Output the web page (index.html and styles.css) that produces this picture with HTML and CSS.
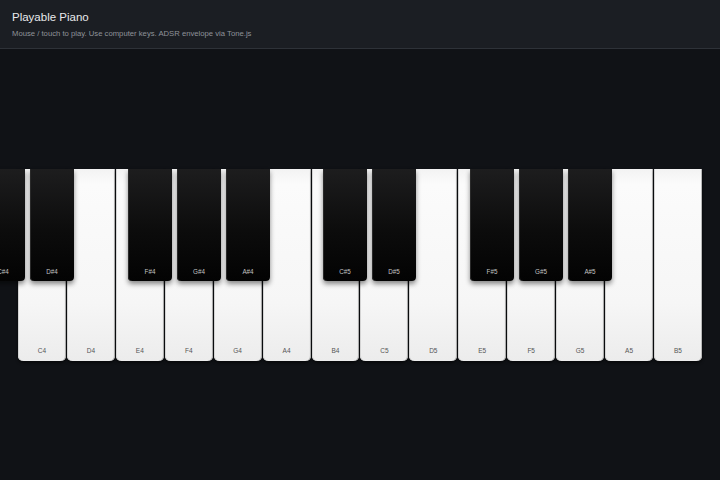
FILE: index.html
```html
<!DOCTYPE html>
<html lang="en">
<head>
<meta charset="utf-8">
<title>Playable Piano</title>
<meta name="viewport" content="width=device-width, initial-scale=1">
<link rel="stylesheet" href="styles.css">
</head>
<body>
<header class="top">
	<h1>Playable Piano</h1>
	<p>Mouse / touch to play. Use computer keys. ADSR envelope via Tone.js</p>
</header>
<main class="stage">
	<div class="piano">
		<div class="whites">
			<div class="wk"><span>C4</span></div>
			<div class="wk"><span>D4</span></div>
			<div class="wk"><span>E4</span></div>
			<div class="wk"><span>F4</span></div>
			<div class="wk"><span>G4</span></div>
			<div class="wk"><span>A4</span></div>
			<div class="wk"><span>B4</span></div>
			<div class="wk"><span>C5</span></div>
			<div class="wk"><span>D5</span></div>
			<div class="wk"><span>E5</span></div>
			<div class="wk"><span>F5</span></div>
			<div class="wk"><span>G5</span></div>
			<div class="wk"><span>A5</span></div>
			<div class="wk"><span>B5</span></div>
		</div>
		<div class="bk cs4"><span>C#4</span></div>
		<div class="bk ds4"><span>D#4</span></div>
		<div class="bk fs4"><span>F#4</span></div>
		<div class="bk gs4"><span>G#4</span></div>
		<div class="bk as4"><span>A#4</span></div>
		<div class="bk cs5"><span>C#5</span></div>
		<div class="bk ds5"><span>D#5</span></div>
		<div class="bk fs5"><span>F#5</span></div>
		<div class="bk gs5"><span>G#5</span></div>
		<div class="bk as5"><span>A#5</span></div>
	</div>
</main>
</body>
</html>
```

FILE: styles.css
```css
*{box-sizing: border-box;}
html, body{height: 100%;}
body{
	margin: 0;
	font-family: 'Liberation Sans', Arial, sans-serif;
	background: #101216;
	color: #e4e6ea;
	overflow: hidden;
}
.top{
	height: 49px;
	padding: 10px 12px 0;
	background: #1b1e23;
	border-bottom: 1px solid #2e3238;
}
.top h1{
	margin: 0;
	font-size: 11.5px;
	font-weight: normal;
	line-height: 14px;
	color: #e8e9eb;
}
.top p{
	margin: 5px 0 0;
	font-size: 7.7px;
	line-height: 9px;
	color: #8f939a;
}

.stage{
	height: calc(100% - 49px);
	display: flex;
	align-items: center;
}
.piano{
	position: relative;
	width: 100%;
	height: 192px;
}
.whites{
	display: flex;
	gap: 1px;
	height: 100%;
	padding: 0 18px;
}
.wk{
	flex: 1;
	display: flex;
	align-items: flex-end;
	justify-content: center;
	padding-bottom: 7px;
	background: linear-gradient(#f3f3f3, #fbfbfb 8%, #f6f6f6 70%, #ececec);
	border-radius: 0 0 5px 5px;
	box-shadow: inset -1px 0 0 #b9b9b9, inset 1px 0 0 #d4d4d4, 0 2px 3px rgba(0,0,0,.55);
}
.wk span{
	font-size: 6.5px;
	color: #555;
}

	.bk{
		position: absolute;
		top: 0;
		width: 44px;
		height: 112px;
		display: flex;
		align-items: flex-end;
		justify-content: center;
		padding-bottom: 6px;
		background: linear-gradient(#1d1d1e, #0c0c0c 55%, #030303);
		border-radius: 0 0 4px 4px;
		box-shadow: inset 1px 0 0 #2a2a2a, 0 3px 5px rgba(0,0,0,.45);
	}
	.bk span{
		font-size: 6.3px;
		color: #c2c2c2;
	}
	.cs4{left: -19px;}
	.ds4{left: 30px;}
	.fs4{left: 128px;}
	.gs4{left: 177px;}
	.as4{left: 226px;}
	.cs5{left: 323px;}
	.ds5{left: 372px;}
	.fs5{left: 470px;}
	.gs5{left: 519px;}
	.as5{left: 568px;}
```
